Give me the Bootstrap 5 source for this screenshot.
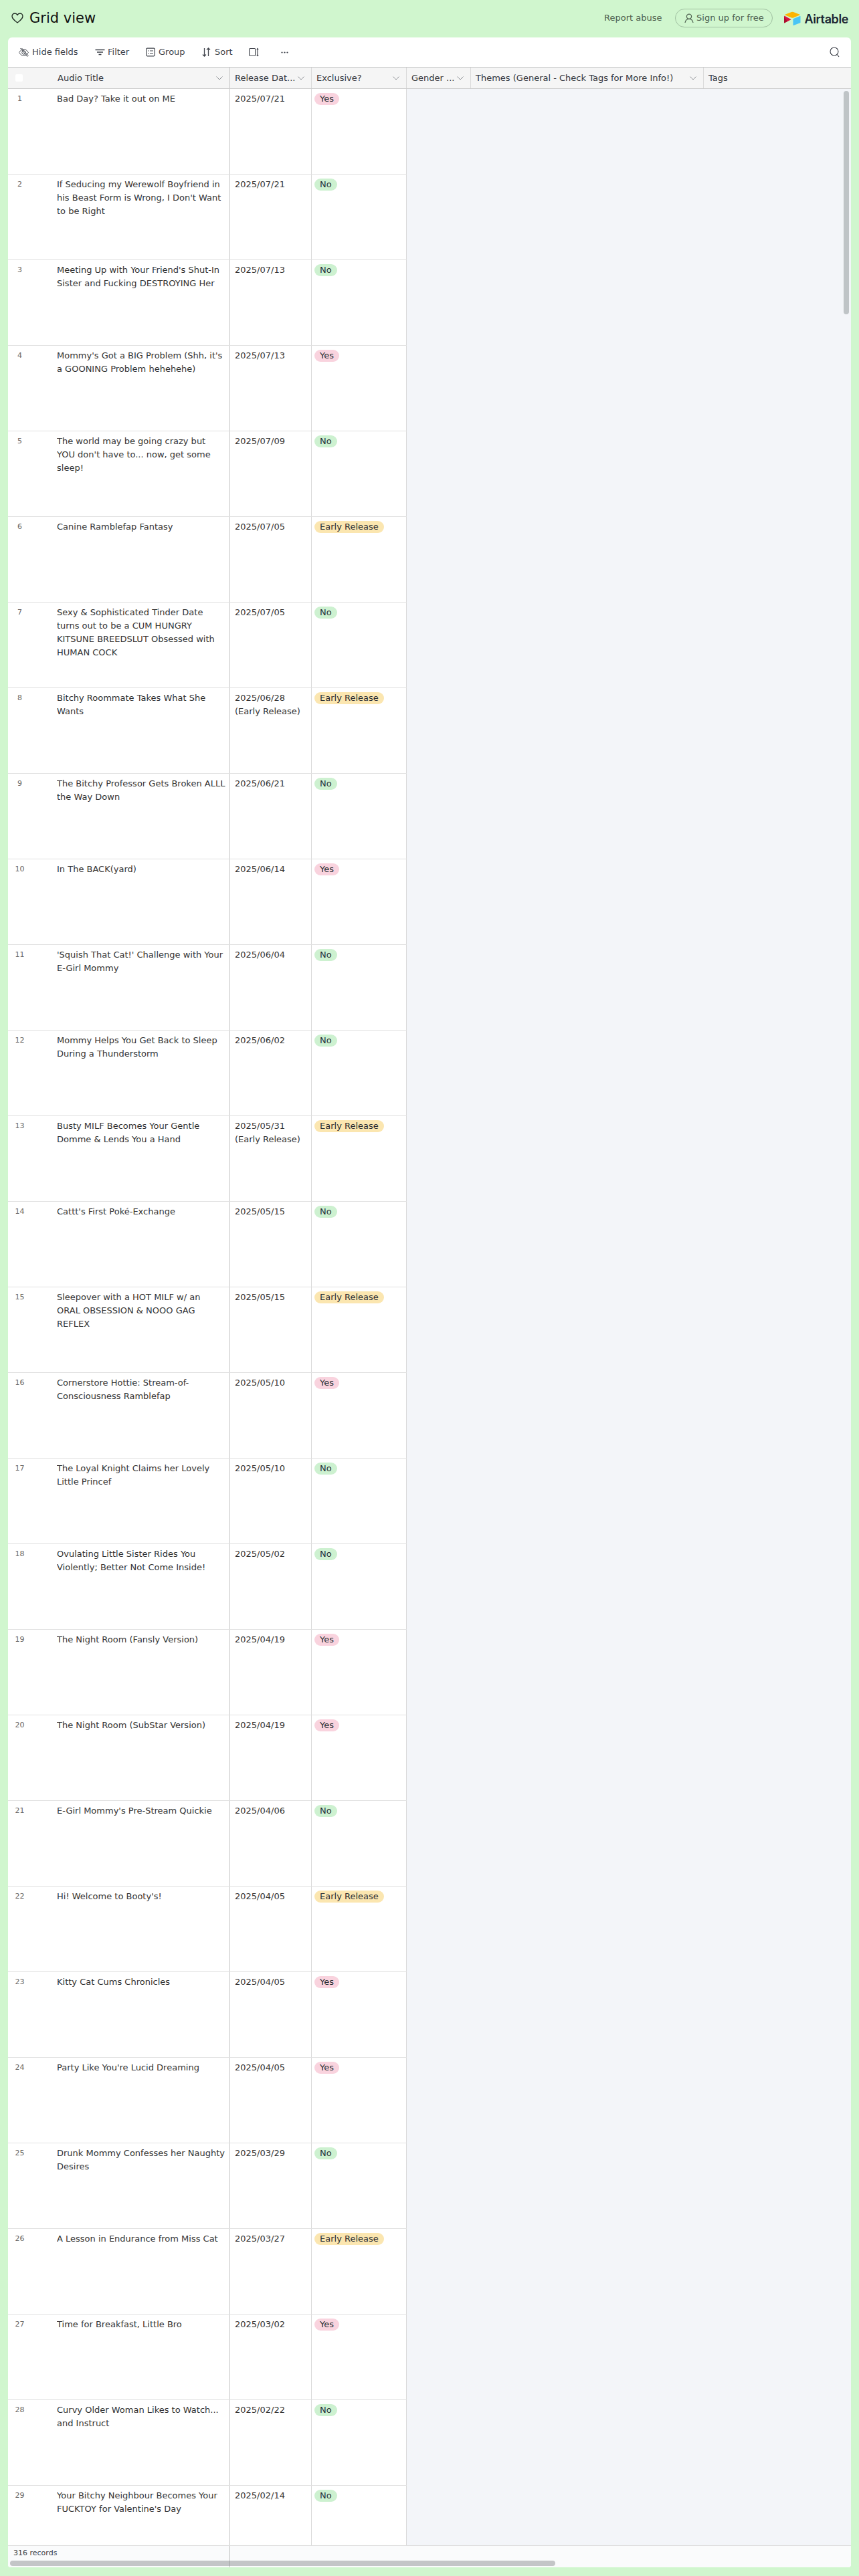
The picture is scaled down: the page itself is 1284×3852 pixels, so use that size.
<!doctype html>
<html lang="en">
<head>
<meta charset="utf-8">
<title>Grid view</title>
<link href="https://cdn.jsdelivr.net/npm/bootstrap@5.3.0/dist/css/bootstrap.min.css" rel="stylesheet">
<style>
html,body{height:3852px;overflow:hidden}
body{background:#d0f6ce;font-family:"DejaVu Sans",sans-serif;color:#333;font-size:13px}
.top-bar{height:56px;padding:0 16px 2px 17px}
.view-name{font-size:21px;line-height:24px;margin:0 0 0 9px;font-weight:400;color:#111}
.report{font-size:13px;color:#4d5f4f;margin-right:20px}
.signup{height:28px;width:146px;border:1px solid #9fbfa0;border-radius:14px;color:#4d5f4f;font-size:13px;padding:0;margin-right:17px;background:transparent}
.at-logo{margin-top:1px}
.at-word{font-family:"Inter","Liberation Sans",sans-serif;font-weight:600;font-size:18px;letter-spacing:-.4px;color:#1d2733;margin-left:5px;margin-top:3px;line-height:20px}
.sheet{margin:0 12px;height:3783px;border:0;border-radius:6px 6px 4px 4px;overflow:hidden;background:#fff;position:relative}
.tools{height:45px;padding:0 17px 0 16px;border-bottom:1px solid #c4c5c6;flex:none}
.tool{font-size:13px;color:#41454d;display:flex;align-items:center;white-space:nowrap;flex:none}
.tool svg{flex:none}
.t-hide{width:114px;gap:5px}
.t-filter{width:76px;gap:4px}
.t-group{width:84px;gap:5px}
.t-sort{width:70px;gap:6px}
.t-height{width:48px}
.head-row{height:32px;background:#f5f5f5;border-bottom:1px solid #cdcdcd;flex:none}
.hcell{display:flex;align-items:center;justify-content:space-between;padding:0 10px 0 7px;height:31px;border-right:1px solid #dadada;flex:none;color:#33363d;white-space:nowrap;overflow:hidden}
.hcell svg{flex:none;margin-left:2px}
.h-lead{width:332px;border-right-color:#c6c6c6;padding-left:11px}
.h-box{width:11px;height:11px;background:#fff;border-radius:2px;flex:none;margin-right:52px}
.h-tags{flex:1 1 auto;border-right:0}
.w-date{width:122px}
.w-excl{width:142px}
.w-gender{width:96px}
.w-themes{width:348px}
.rows-wrap{height:3673px;overflow:hidden;background:#f3f5f9;flex:none}
.row-line{height:128px;width:596px;background:#fff;border-bottom:1px solid #e0e0e0;display:flex}
.cell{flex:none;overflow:hidden;padding:5px 0 0 7px;border-right:1px solid #dadada;line-height:20px;color:#333}
.c-num{width:73px;border-right:0;padding:5px 38px 0 0;color:#666;font-size:11px;text-align:center}
.c-title{width:259px;border-right-color:#c6c6c6;padding:5px 6px 0 0}
.c-excl{padding-left:4px}
.pill{display:inline-block;height:18px;line-height:18px;border-radius:9px;padding:0 8px;font-size:13px;font-weight:400;color:#2c2f33;margin-top:1px;vertical-align:top}
.p-yes{background:#f9d3de}
.p-no{background:#cdf1d0}
.p-early{background:#fbe6b0}
.foot{height:33px;background:#fafbfc;border-top:1px solid #dedede;padding:3px 0 0 8px;font-size:11px;line-height:16px;color:#3b3e45;position:relative;flex:none}
.foot-line{position:absolute;left:331px;top:0;bottom:0;width:1px;background:#c0c0c0}
.bar-v{position:absolute;right:3px;top:80px;width:8px;height:334px;background:#bfc4c7;border-radius:4px}
.bar-h{position:absolute;left:3px;bottom:2px;width:815px;height:8px;background:rgba(120,122,126,.42);border-radius:4px}
</style>
</head>
<body>
<header class="top-bar d-flex align-items-center">
  <svg width="18" height="18" viewBox="0 0 18 18" fill="none" stroke="#1f2a22" stroke-width="1.3"><path d="M9 16C4 12 1 9.500 1 6.200 1 3.700 3 2 5.100 2 6.800 2 8.200 2.900 9 4.400 9.800 2.900 11.200 2 12.900 2 15 2 17 3.700 17 6.200 17 9.500 14 12 9 16Z"/></svg>
  <h1 class="view-name">Grid view</h1>
  <div class="ms-auto d-flex align-items-center">
    <a class="report text-decoration-none" href="#">Report abuse</a>
    <button class="signup btn d-flex align-items-center justify-content-center gap-1" type="button">
      <svg width="14" height="15" viewBox="0 0 14 15" fill="none" stroke="#4d5f4f" stroke-width="1.2"><circle cx="7" cy="4.700" r="3.600"/><path d="M1 14c.6-3.400 2.800-5.600 6-5.600S12.400 10.600 13 14"/></svg>
      <span>Sign up for free</span>
    </button>
    <svg class="at-logo" width="25" height="22" viewBox="0 0 25 22"><path d="M11 1 1.500 4.800Q.9 5.200 1.500 5.500L11 9.500Q12.500 10 14 9.500L23.500 5.500Q24.100 5.200 23.500 4.800L14 1Q12.500 .5 11 1Z" fill="#fcb400"/><path d="M13.500 11.500V20.500Q13.500 21.200 14.200 21L24 17.300Q24.500 17 24.500 16.500V7.500Q24.500 6.800 23.800 7L14 11Q13.500 11 13.500 11.500Z" fill="#49c5f5"/><path d="M0 7.200V16.700Q0 17.500 .8 17.200L10 12.500Q10.700 12.100 10 11.700L.8 6.800Q0 6.500 0 7.200Z" fill="#d8123f"/><path d="M5 14.800 .8 17.200Q0 17.500 0 16.700V8.500Z" fill="#a8102f"/></svg>
    <span class="at-word">Airtable</span>
  </div>
</header>

<main class="card sheet">
  <div class="tools d-flex align-items-center">
    <span class="tool t-hide"><svg width="15" height="15" viewBox="0 0 15 15" fill="none" stroke="#41454d" stroke-width="1"><path d="M.7 7.500C2.500 4.300 4.800 2.800 7.500 2.800S12.500 4.300 14.300 7.500C12.500 10.700 10.200 12.200 7.500 12.200S2.500 10.700 .7 7.500Z"/><circle cx="7.500" cy="7.500" r="2.700"/><path d="M2.500 1 13 13.800M4.500 1 14.500 12.500"/></svg>Hide fields</span>
    <span class="tool t-filter"><svg width="15" height="12" viewBox="0 0 15 12" fill="none" stroke="#41454d" stroke-width="1.300"><path d="M.5 2.500H14.500M3 6H12M5.500 9.500H9.500"/></svg>Filter</span>
    <span class="tool t-group"><svg width="14" height="14" viewBox="0 0 14 14" fill="none" stroke="#41454d" stroke-width="1.200"><rect x=".7" y="1.200" width="12.600" height="11.600" rx="1.500"/><path d="M3 5H4.500M3 9H4.500M6 5H11M6 9H11"/></svg>Group</span>
    <span class="tool t-sort"><svg width="13" height="14" viewBox="0 0 13 14" fill="none" stroke="#41454d" stroke-width="1.300"><path d="M3.500 1V13M1 10.500 3.500 13 6 10.500M9.500 13V1M7 3.500 9.500 1 12 3.500"/></svg>Sort</span>
    <span class="tool t-height"><svg width="15" height="14" viewBox="0 0 15 14" fill="none" stroke="#41454d" stroke-width="1.200"><rect x=".7" y="1.500" width="9" height="11" rx="1.200"/><path d="M13 1.500V12.500M11.800 3 13 1.500 14.200 3M11.800 11 13 12.500 14.200 11"/></svg></span>
    <span class="tool"><svg width="11" height="3" viewBox="0 0 11 3" fill="#41454d"><circle cx="1.500" cy="1.500" r="1.100"/><circle cx="5.500" cy="1.500" r="1.100"/><circle cx="9.500" cy="1.500" r="1.100"/></svg></span>
    <span class="tool ms-auto"><svg width="15" height="16" viewBox="0 0 15 16" fill="none" stroke="#41454d" stroke-width="1.100"><circle cx="7" cy="7" r="6"/><path d="M11 11 14 15"/></svg></span>
  </div>
  <div class="head-row d-flex">
    <div class="hcell h-lead"><span class="h-box"></span><span class="flex-grow-1">Audio Title</span><svg width="10" height="6" viewBox="0 0 10 6" fill="none" stroke="#8b8e93"><path d="M.5 .5 5 5 9.500 .5"/></svg></div>
    <div class="hcell w-date"><span>Release Dat...</span><svg width="10" height="6" viewBox="0 0 10 6" fill="none" stroke="#8b8e93"><path d="M.5 .5 5 5 9.500 .5"/></svg></div>
    <div class="hcell w-excl"><span>Exclusive?</span><svg width="10" height="6" viewBox="0 0 10 6" fill="none" stroke="#8b8e93"><path d="M.5 .5 5 5 9.500 .5"/></svg></div>
    <div class="hcell w-gender"><span>Gender ...</span><svg width="10" height="6" viewBox="0 0 10 6" fill="none" stroke="#8b8e93"><path d="M.5 .5 5 5 9.500 .5"/></svg></div>
    <div class="hcell w-themes"><span>Themes (General - Check Tags for More Info!)</span><svg width="10" height="6" viewBox="0 0 10 6" fill="none" stroke="#8b8e93"><path d="M.5 .5 5 5 9.500 .5"/></svg></div>
    <div class="hcell h-tags"><span>Tags</span></div>
  </div>
  <div class="rows-wrap" id="rows"></div>
  <div class="foot"><span class="foot-line"></span>316 records</div>
  <span class="bar-v"></span>
  <span class="bar-h"></span>
</main>

<script src="https://cdn.jsdelivr.net/npm/bootstrap@5.3.0/dist/js/bootstrap.bundle.min.js"></script>
<script>
const D=[
["Bad Day? Take it out on ME","2025/07/21","Yes"],
["If Seducing my Werewolf Boyfriend in his Beast Form is Wrong, I Don't Want to be Right","2025/07/21","No"],
["Meeting Up with Your Friend's Shut-In Sister and Fucking DESTROYING Her","2025/07/13","No"],
["Mommy's Got a BIG Problem (Shh, it's a GOONING Problem hehehehe)","2025/07/13","Yes"],
["The world may be going crazy but YOU don't have to... now, get some sleep!","2025/07/09","No"],
["Canine Ramblefap Fantasy","2025/07/05","Early Release"],
["Sexy & Sophisticated Tinder Date turns out to be a CUM HUNGRY KITSUNE BREEDSLUT Obsessed with HUMAN COCK","2025/07/05","No"],
["Bitchy Roommate Takes What She Wants","2025/06/28 (Early Release)","Early Release"],
["The Bitchy Professor Gets Broken ALLL the Way Down","2025/06/21","No"],
["In The BACK(yard)","2025/06/14","Yes"],
["'Squish That Cat!' Challenge with Your E-Girl Mommy","2025/06/04","No"],
["Mommy Helps You Get Back to Sleep During a Thunderstorm","2025/06/02","No"],
["Busty MILF Becomes Your Gentle Domme & Lends You a Hand","2025/05/31 (Early Release)","Early Release"],
["Cattt's First Poké-Exchange","2025/05/15","No"],
["Sleepover with a HOT MILF w/ an ORAL OBSESSION & NOOO GAG REFLEX","2025/05/15","Early Release"],
["Cornerstore Hottie: Stream-of-Consciousness Ramblefap","2025/05/10","Yes"],
["The Loyal Knight Claims her Lovely Little Princef","2025/05/10","No"],
["Ovulating Little Sister Rides You Violently; Better Not Come Inside!","2025/05/02","No"],
["The Night Room (Fansly Version)","2025/04/19","Yes"],
["The Night Room (SubStar Version)","2025/04/19","Yes"],
["E-Girl Mommy's Pre-Stream Quickie","2025/04/06","No"],
["Hi! Welcome to Booty's!","2025/04/05","Early Release"],
["Kitty Cat Cums Chronicles","2025/04/05","Yes"],
["Party Like You're Lucid Dreaming","2025/04/05","Yes"],
["Drunk Mommy Confesses her Naughty Desires","2025/03/29","No"],
["A Lesson in Endurance from Miss Cat","2025/03/27","Early Release"],
["Time for Breakfast, Little Bro","2025/03/02","Yes"],
["Curvy Older Woman Likes to Watch... and Instruct","2025/02/22","No"],
["Your Bitchy Neighbour Becomes Your FUCKTOY for Valentine's Day","2025/02/14","No"]];
const cls={Yes:"p-yes",No:"p-no","Early Release":"p-early"};
const box=document.getElementById("rows");
D.forEach((r,i)=>{
 const row=document.createElement("div");row.className="row-line";
 [["cell c-num",String(i+1)],["cell c-title",r[0]],["cell w-date",r[1]]].forEach(([c,t])=>{
  const d=document.createElement("div");d.className=c;d.textContent=t;row.appendChild(d);});
 const e=document.createElement("div");e.className="cell c-excl w-excl";
 const p=document.createElement("span");p.className="badge pill "+cls[r[2]];p.textContent=r[2];e.appendChild(p);row.appendChild(e);
 box.appendChild(row);
});
</script>
</body>
</html>
